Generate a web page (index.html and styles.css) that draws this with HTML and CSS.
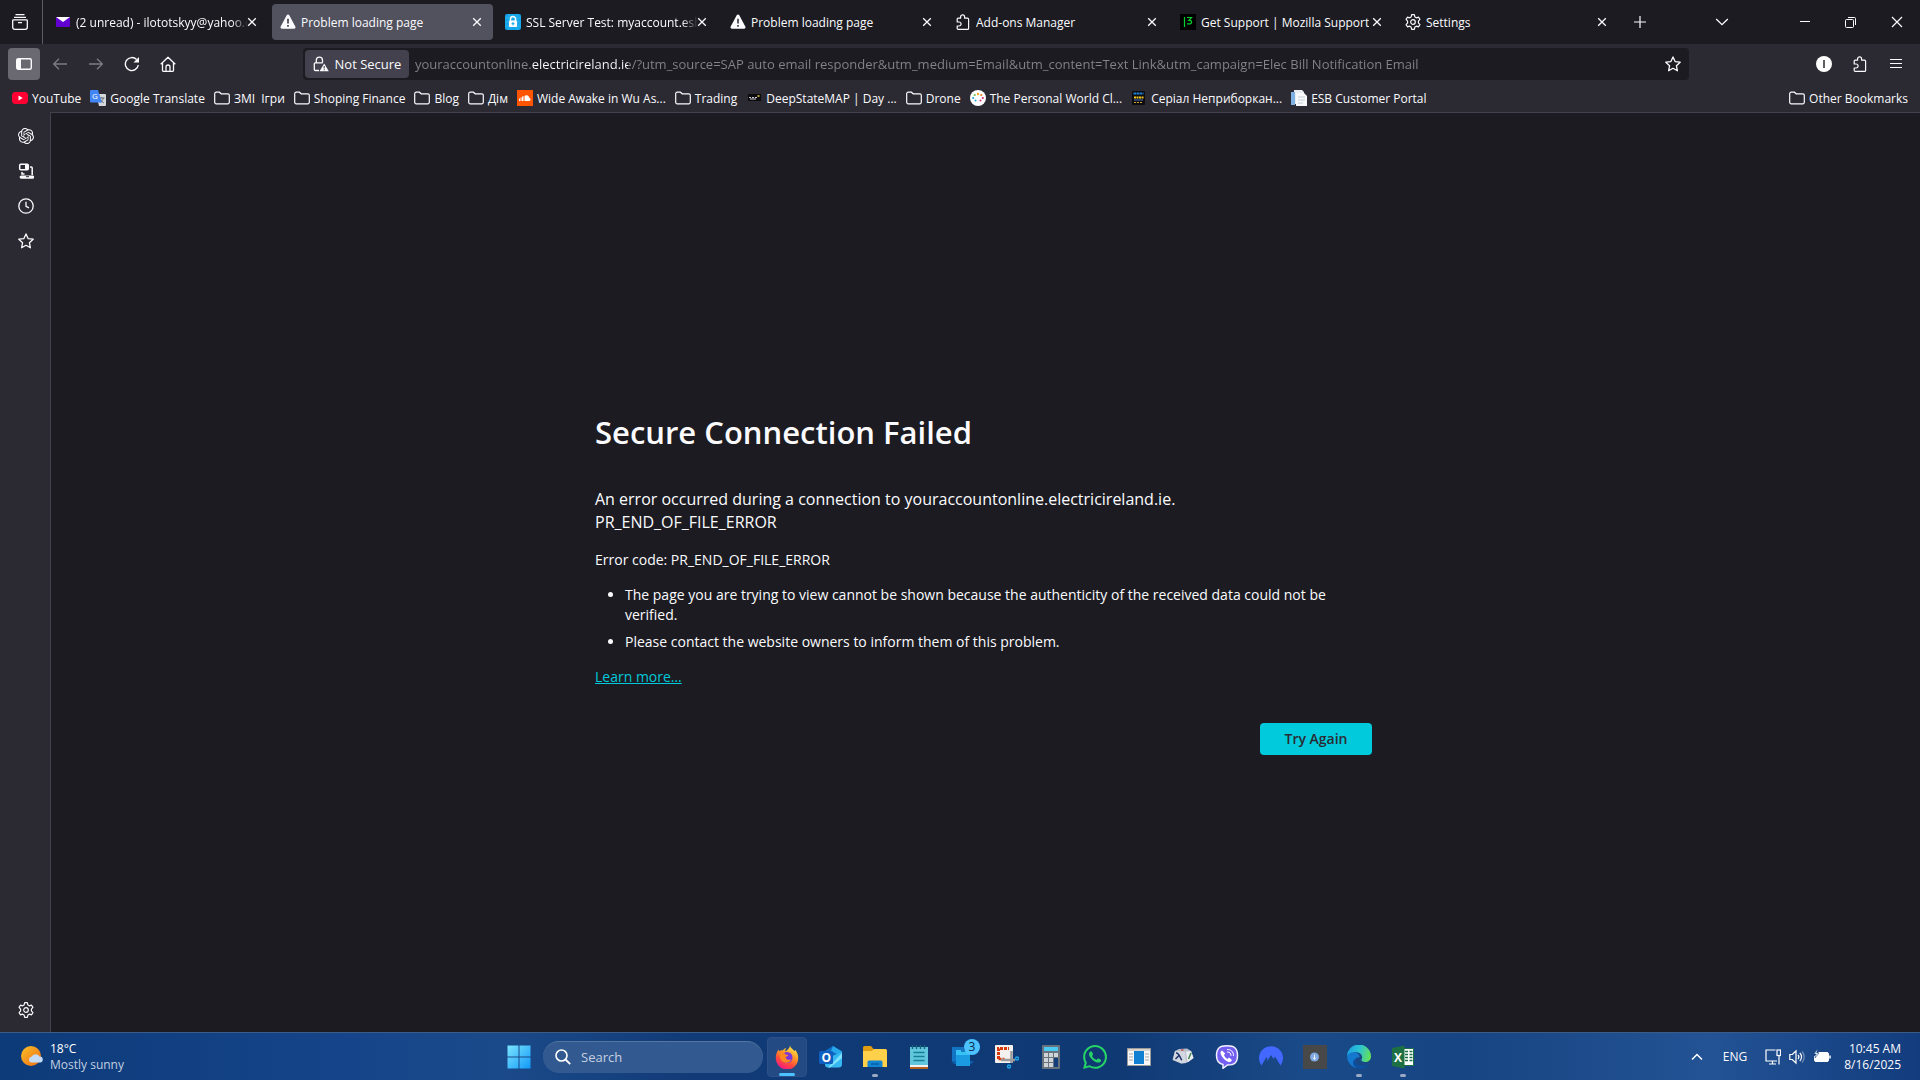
FILE: index.html
```
<!DOCTYPE html>
<html lang="en">
<head>
    <meta charset="utf-8">
    <title>Problem loading page</title>
    <link rel="stylesheet" href="styles.css">
</head>
<body>
    <!-- shared icons -->
    <svg class="defs" width="0" height="0">
        <symbol id="i-close" viewBox="0 0 16 16"><path d="M4.2 4.2l7.6 7.6M11.8 4.2l-7.6 7.6" fill="none" stroke="currentColor" stroke-width="1.3"/></symbol>
        <symbol id="i-warn" viewBox="0 0 16 16"><path d="M6.7 1.3a1.5 1.5 0 0 1 2.6 0l6 11.1a1.5 1.5 0 0 1-1.3 2.3H2a1.500 1.500 0 0 1-1.300-2.300z" fill="#fbfbfe"/><path d="M8 4.800v4.700M8 11v1.700" stroke="#2b2a33" stroke-width="1.500"/></symbol>
        <symbol id="i-folder" viewBox="0 0 16 16"><path d="M.7 12.300V3.700a1.500 1.500 0 0 1 1.500-1.500h3.200l1.800 1.600h6.600a1.500 1.500 0 0 1 1.500 1.500v7a1.500 1.500 0 0 1-1.500 1.500H2.200a1.500 1.500 0 0 1-1.500-1.500z" fill="none" stroke="currentColor" stroke-width="1.200"/></symbol>
        <symbol id="i-puzzle" viewBox="0 0 16 16"><path d="M2.200 8V5.200a1 1 0 0 1 1-1h2.400V2.900a2 2 0 0 1 4 0v1.300h3a1 1 0 0 1 1 1v9.200a1 1 0 0 1-1 1H3.200a1 1 0 0 1-1-1V12h1.900a2 2 0 0 0 0-4z" fill="none" stroke="currentColor" stroke-width="1.200" stroke-linejoin="round"/></symbol>
        <symbol id="i-gear" viewBox="0 0 16 16"><path d="M6.700.7h2.600l.6 2.200 1.500.9 2.200-.6 1.300 2.200-1.500 1.700v1.800l1.500 1.700-1.300 2.200-2.200-.6-1.500.9-.6 2.200H6.700l-.6-2.200-1.500-.9-2.200.6-1.300-2.200 1.500-1.700V7.100L1.100 5.400l1.300-2.200 2.200.6 1.500-.9z" fill="none" stroke="currentColor" stroke-width="1.200" stroke-linejoin="round"/><circle cx="8" cy="8" r="2.300" fill="none" stroke="currentColor" stroke-width="1.200"/></symbol>
        <symbol id="i-star" viewBox="0 0 16 16"><path d="M8 .9l2.100 4.700 5.100.6-3.800 3.500 1 5.100L8 12.300l-4.400 2.500 1-5.100L.8 6.200l5.100-.6z" fill="none" stroke="currentColor" stroke-width="1.300" stroke-linejoin="round"/></symbol>
    </svg>

    <header class="browser-top">
        <div class="tab-bar">
            <button class="view-btn" aria-label="Firefox View">
                <svg width="16" height="16" viewBox="0 0 16 16" fill="none" stroke="currentColor" stroke-width="1.300"><path d="M3.500.700h9M2 3.400h12M1.500 5.800h13a.8.8 0 0 1 .8.8v6.700a2 2 0 0 1-2 2H2.700a2 2 0 0 1-2-2V6.600a.8.8 0 0 1 .8-.8zM6 8.600h4"/></svg>
            </button>
            <nav class="tabs">
                <div class="tab">
                    <svg class="icon" viewBox="0 0 16 16"><rect x="1" y="3" width="14" height="10" rx="1" fill="#6001d2"/><path d="M1 3h14L8 8z" fill="#fff"/></svg>
                    <span class="tab-label faded">(2 unread) - ilototskyy@yahoo.c</span>
                    <button class="tab-close" aria-label="Close tab"><svg class="icon"><use href="#i-close"/></svg></button>
                </div>
                <div class="tab active">
                    <svg class="icon"><use href="#i-warn"/></svg>
                    <span class="tab-label">Problem loading page</span>
                    <button class="tab-close" aria-label="Close tab"><svg class="icon"><use href="#i-close"/></svg></button>
                </div>
                <div class="tab">
                    <svg class="icon" viewBox="0 0 16 16"><rect width="16" height="16" rx="2" fill="#12a5ea"/><path d="M0 4h16M0 8h16M0 12h16M4 0v16M12 0v16" stroke="#45bcf2" stroke-width=".5"/><path d="M5.500 7V5a2.500 2.500 0 0 1 5 0v2" fill="none" stroke="#fff" stroke-width="1.500"/><rect x="4" y="6.500" width="8" height="6.500" rx="1" fill="#fff"/><path d="M8 8v3.500M6.500 9.700h3" stroke="#12a5ea"/></svg>
                    <span class="tab-label faded">SSL Server Test: myaccount.esbr</span>
                    <button class="tab-close" aria-label="Close tab"><svg class="icon"><use href="#i-close"/></svg></button>
                </div>
                <div class="tab">
                    <svg class="icon"><use href="#i-warn"/></svg>
                    <span class="tab-label">Problem loading page</span>
                    <button class="tab-close" aria-label="Close tab"><svg class="icon"><use href="#i-close"/></svg></button>
                </div>
                <div class="tab">
                    <svg class="icon"><use href="#i-puzzle"/></svg>
                    <span class="tab-label">Add-ons Manager</span>
                    <button class="tab-close" aria-label="Close tab"><svg class="icon"><use href="#i-close"/></svg></button>
                </div>
                <div class="tab">
                    <svg class="icon" viewBox="0 0 16 16"><path d="M0 0h16v16H0z"/><path d="M4.500 3v10M7 3.500h4.500L9 6.300c3.500-.3 3.500 4-.3 3.500H7" fill="none" stroke="#00d230" stroke-width="1.200"/></svg>
                    <span class="tab-label">Get Support | Mozilla Support</span>
                    <button class="tab-close" aria-label="Close tab"><svg class="icon"><use href="#i-close"/></svg></button>
                </div>
                <div class="tab">
                    <svg class="icon"><use href="#i-gear"/></svg>
                    <span class="tab-label">Settings</span>
                    <button class="tab-close" aria-label="Close tab"><svg class="icon"><use href="#i-close"/></svg></button>
                </div>
            </nav>
            <button class="tool-btn new-tab" aria-label="New tab"><svg class="icon" viewBox="0 0 16 16"><path d="M8 2v12M2 8h12" stroke="currentColor" stroke-width="1.200"/></svg></button>
            <button class="tool-btn all-tabs" aria-label="List all tabs"><svg class="icon" viewBox="0 0 16 16"><path d="M2.200 5L8 10.700 13.800 5" fill="none" stroke="currentColor" stroke-width="1.300"/></svg></button>
            <div class="window-btns">
                <button aria-label="Minimize"><svg class="icon" viewBox="0 0 16 16"><path d="M3 7.500h10" stroke="currentColor"/></svg></button>
                <button aria-label="Restore"><svg class="icon" viewBox="0 0 16 16" fill="none" stroke="currentColor"><rect x="2.500" y="5.500" width="8" height="8" rx="1"/><path d="M5 3.500h6.500a1 1 0 0 1 1 1V11"/></svg></button>
                <button aria-label="Close"><svg class="icon" viewBox="0 0 16 16"><path d="M3 3l10 10M13 3L3 13" stroke="currentColor" stroke-width="1.200"/></svg></button>
            </div>
        </div>

        <div class="nav-bar">
            <div class="nav-left">
                <button class="tool-btn pressed" aria-label="Sidebar"><svg class="icon" viewBox="0 0 16 16"><rect x=".7" y="2.700" width="14.600" height="10.600" rx="1.500" fill="none" stroke="currentColor" stroke-width="1.400"/><path d="M1 3h4v10H1z" fill="currentColor"/></svg></button>
                <button class="tool-btn" aria-label="Back" disabled><svg class="icon" viewBox="0 0 16 16"><path d="M15 8H1.800M7 2.700L1.700 8 7 13.300" fill="none" stroke="currentColor" stroke-width="1.300"/></svg></button>
                <button class="tool-btn" aria-label="Forward" disabled><svg class="icon" viewBox="0 0 16 16"><path d="M1 8h13.200M9 2.700L14.300 8 9 13.300" fill="none" stroke="currentColor" stroke-width="1.300"/></svg></button>
                <button class="tool-btn" aria-label="Reload"><svg class="icon" viewBox="0 0 16 16"><path d="M14.300 9A6.500 6.500 0 1 1 12.600 3.600" fill="none" stroke="currentColor" stroke-width="1.400"/><path d="M15 .9V6.500H9.500z" fill="currentColor"/></svg></button>
                <button class="tool-btn" aria-label="Home"><svg class="icon" viewBox="0 0 16 16" fill="none" stroke="currentColor" stroke-width="1.300" stroke-linejoin="round"><path d="M.7 8.200L8 1.200l7.300 7M2.500 6.800v7.700a.8.8 0 0 0 .8.8h9.400a.8.8 0 0 0 .8-.8V6.800M6 15v-4a2 2 0 0 1 4 0v4"/></svg></button>
            </div>
            <div class="url-bar">
                <button class="identity">
                    <svg class="icon" viewBox="0 0 16 16"><path d="M3.300 6.500V4.300a3 3 0 0 1 6.200 0v2.200M6 14.500H2.300a1 1 0 0 1-1-1v-5.700a1 1 0 0 1 1-1h7.500" fill="none" stroke="currentColor" stroke-width="1.300"/><path d="M11.200 7.500l4.600 7.700H6.600z" fill="currentColor"/><path d="M11.200 10v2.500M11.200 13.300v1" stroke="#42414d" stroke-width="1.100"/></svg>
                    Not Secure
                </button>
                <input class="url-input" type="text" aria-label="Address" value="youraccountonline.electricireland.ie/?utm_source=SAP auto email responder&amp;utm_medium=Email&amp;utm_content=Text Link&amp;utm_campaign=Elec Bill Notification Email">
                <button class="tool-btn star" aria-label="Bookmark this page"><svg class="icon"><use href="#i-star"/></svg></button>
            </div>
            <div class="nav-right">
                <button class="tool-btn" aria-label="Account"><svg class="icon" viewBox="0 0 16 16"><circle cx="8" cy="8" r="8" fill="#fff"/><path d="M8 4v8" stroke="#1c1b22" stroke-width="1.400"/></svg></button>
                <button class="tool-btn" aria-label="Extensions"><svg class="icon"><use href="#i-puzzle"/></svg></button>
                <button class="tool-btn" aria-label="Menu"><svg class="icon" viewBox="0 0 16 16"><path d="M2 3.500h12M2 7.500h12M2 11.500h12" stroke="currentColor" stroke-width="1.200"/></svg></button>
            </div>
        </div>

        <nav class="bookmarks">
            <a href="#"><svg class="icon" viewBox="0 0 16 16"><rect y="2" width="16" height="12" rx="3.500" fill="#f03"/><path d="M6.500 5.500v5L10.700 8z" fill="#fff"/></svg>YouTube</a>
            <a href="#"><svg class="icon" viewBox="0 0 16 16"><path d="M6 4h9a1 1 0 0 1 1 1v10a1 1 0 0 1-1 1H9z" fill="#d5d7da"/><path d="M9 8h5.500M11.800 7v1M13.500 8c-.5 2-2 3.500-3.500 4.300M10.300 9.300c.7 1.500 2 2.700 3.500 3.500" fill="none" stroke="#5f6368" stroke-width=".9"/><path d="M1 0h7l4 12.500H1a1 1 0 0 1-1-1V1a1 1 0 0 1 1-1z" fill="#4285f4"/><text x="2" y="9" font-size="8" fill="#fff">G</text></svg>Google Translate</a>
            <a href="#"><svg class="icon"><use href="#i-folder"/></svg>ЗМІ&nbsp; Ігри</a>
            <a href="#"><svg class="icon"><use href="#i-folder"/></svg>Shoping Finance</a>
            <a href="#"><svg class="icon"><use href="#i-folder"/></svg>Blog</a>
            <a href="#"><svg class="icon"><use href="#i-folder"/></svg>Дім</a>
            <a href="#"><svg class="icon" viewBox="0 0 16 16"><path d="M0 0h16v16H0z" fill="#ff5500"/><path d="M2.500 8.500V11M4 7.500V11M5.500 6.500V11M7 6V11" stroke="#fff"/><path d="M8 5.500a3 3 0 0 1 4.300 2.300A1.700 1.700 0 0 1 12.500 11H8z" fill="#fff"/></svg>Wide Awake in Wu As...</a>
            <a href="#"><svg class="icon"><use href="#i-folder"/></svg>Trading</a>
            <a href="#"><svg class="icon" viewBox="0 0 16 16"><path d="M2 4h13v7H2z" fill="#0b0b0d"/><path d="M3 7.500h2M6 7.500h2M9 7.500h2M4 9h6" stroke="#cfcfd8"/><path d="M11.500 6h2" stroke="#e6d93a" stroke-width="1.500"/></svg>DeepStateMAP | Day ...</a>
            <a href="#"><svg class="icon"><use href="#i-folder"/></svg>Drone</a>
            <a href="#"><svg class="icon" viewBox="0 0 16 16"><circle cx="8" cy="8" r="8" fill="#fff"/><circle cx="3.200" cy="8" r="1.100" fill="#29a3dc"/><circle cx="4.700" cy="5" r="1.100" fill="#6cbe45"/><circle cx="5.500" cy="10.500" r="1" fill="#29a3dc"/><circle cx="8" cy="4" r="1.200" fill="#f5a623"/><circle cx="11.300" cy="5" r="1.100" fill="#f07c1f"/><circle cx="12.800" cy="8" r="1.100" fill="#d9277a"/><circle cx="10.500" cy="10.500" r="1" fill="#d9277a"/></svg>The Personal World Cl...</a>
            <a href="#"><svg class="icon" viewBox="0 0 16 16"><rect x="1" y="1" width="13" height="14" rx="1" fill="#0c0c0f"/><path d="M2.500 3.500h10" stroke="#1c7fd6" stroke-width="2.200" stroke-dasharray="2.500 .5"/><path d="M3 7.500h9.500" stroke="#f3c81b" stroke-width="1.800" stroke-dasharray="2 .5"/><path d="M3 10h9" stroke="#4d6dc0"/><path d="M3 12.500h9" stroke="#c9a532" stroke-dasharray="2 1"/></svg>Серіал Неприборкан...</a>
            <a href="#"><svg class="icon" viewBox="0 0 16 16"><path d="M3 0h8l2 2v12H3z" fill="#e9edf2"/><path d="M0 2h4v13H0z" fill="#7fb2e2"/><path d="M5 3h8l3 3v10H5z" fill="#f7f9fb"/><path d="M7 7h7M7 10h7M7 13h5" stroke="#c5ced8"/></svg>ESB Customer Portal</a>
            <a class="other" href="#"><svg class="icon"><use href="#i-folder"/></svg>Other Bookmarks</a>
        </nav>
    </header>

    <div class="browser-main">
        <aside class="sidebar">
            <button aria-label="AI chatbot"><svg class="icon" viewBox="0 0 24 24" fill="currentColor"><path d="M22.2819 9.8211a5.9847 5.9847 0 0 0-.5157-4.9108 6.0462 6.0462 0 0 0-6.5098-2.9A6.0651 6.0651 0 0 0 4.9807 4.1818a5.9847 5.9847 0 0 0-3.9977 2.9 6.0462 6.0462 0 0 0 .7427 7.0966 5.98 5.98 0 0 0 .511 4.9107 6.051 6.051 0 0 0 6.5146 2.9001A5.9847 5.9847 0 0 0 13.2599 24a6.0557 6.0557 0 0 0 5.7718-4.2058 5.9894 5.9894 0 0 0 3.9977-2.9001 6.0557 6.0557 0 0 0-.7475-7.0729zm-9.022 12.6081a4.4755 4.4755 0 0 1-2.8764-1.0408l.1419-.0804 4.7783-2.7582a.7948.7948 0 0 0 .3927-.6813v-6.7369l2.02 1.1686a.071.071 0 0 1 .038.052v5.5826a4.504 4.504 0 0 1-4.4945 4.4944zm-9.6607-4.1254a4.4708 4.4708 0 0 1-.5346-3.0137l.142.0852 4.783 2.7582a.7712.7712 0 0 0 .7806 0l5.8428-3.3685v2.3324a.0804.0804 0 0 1-.0332.0615L9.74 19.9502a4.4992 4.4992 0 0 1-6.1408-1.6464zM2.3408 7.8956a4.485 4.485 0 0 1 2.3655-1.9728V11.6a.7664.7664 0 0 0 .3879.6765l5.8144 3.3543-2.0201 1.1685a.0757.0757 0 0 1-.071 0l-4.8303-2.7865A4.504 4.504 0 0 1 2.3408 7.872zm16.5963 3.8558L13.1038 8.364 15.1192 7.2a.0757.0757 0 0 1 .071 0l4.8303 2.7913a4.4944 4.4944 0 0 1-.6765 8.1042v-5.6772a.79.79 0 0 0-.407-.667zm2.0107-3.0231l-.142-.0852-4.7735-2.7818a.7759.7759 0 0 0-.7854 0L9.409 9.2297V6.8974a.0662.0662 0 0 1 .0284-.0615l4.8303-2.7866a4.4992 4.4992 0 0 1 6.6802 4.66zM8.3065 12.863l-2.02-1.1638a.0804.0804 0 0 1-.038-.0567V6.0742a4.4992 4.4992 0 0 1 7.3757-3.4537l-.142.0805L8.704 5.459a.7948.7948 0 0 0-.3927.6813zm1.0976-2.3654l2.602-1.4998 2.6069 1.4998v2.9994l-2.5974 1.4997-2.6067-1.4997Z"/></svg></button>
            <button aria-label="Synced tabs"><svg class="icon" viewBox="0 0 16 16"><rect x="1.700" y="1.200" width="8.600" height="5.600" rx="1" fill="none" stroke="currentColor" stroke-width="1.500"/><path d="M7 1h3v6H7zM3.200 12.500h11.600a1.600 1.600 0 0 1 0 3.200H3.200a1.600 1.600 0 0 1 0-3.200z" fill="currentColor"/><path d="M4 9v2h2.500M12 4h1.200a1 1 0 0 1 1 1v7" fill="none" stroke="currentColor" stroke-width="1.500"/><path d="M8 13.700h3" stroke="#2b2a33"/></svg></button>
            <button aria-label="History"><svg class="icon" viewBox="0 0 16 16" fill="none" stroke="currentColor" stroke-width="1.300"><circle cx="8" cy="8" r="7.200"/><path d="M8 3.800v4.500l3 1.500"/></svg></button>
            <button aria-label="Bookmarks"><svg class="icon"><use href="#i-star"/></svg></button>
            <button class="customize" aria-label="Customize sidebar"><svg class="icon"><use href="#i-gear"/></svg></button>
        </aside>

        <main class="page">
            <div class="error">
                <h1>Secure Connection Failed</h1>
                <p class="short-desc">An error occurred during a connection to youraccountonline.electricireland.ie. PR_END_OF_FILE_ERROR</p>
                <p>Error code: PR_END_OF_FILE_ERROR</p>
                <ul>
                    <li>The page you are trying to view cannot be shown because the authenticity of the received data could not be verified.</li>
                    <li>Please contact the website owners to inform them of this problem.</li>
                </ul>
                <p><a href="#">Learn more…</a></p>
                <div class="actions"><button class="try-again">Try Again</button></div>
            </div>
        </main>
    </div>

    <footer class="taskbar">
        <button class="weather">
            <svg width="24" height="24" viewBox="0 0 24 24"><defs><linearGradient id="sun" x1="0" y1="0" x2="1" y2="1"><stop offset="0" stop-color="#f9c22b"/><stop offset="1" stop-color="#f06a12"/></linearGradient></defs><circle cx="11" cy="11" r="10" fill="url(#sun)"/><path d="M11 17.500a3 3 0 0 1 .5-5.800 4.500 4.500 0 0 1 8-.2 3 3 0 0 1 .5 6z" fill="#c4dbf8"/></svg>
            <span><span class="temp">18°C</span><br>Mostly sunny</span>
        </button>

        <div class="apps">
            <button class="app" aria-label="Start"><svg width="24" height="24" viewBox="0 0 24 24"><defs><linearGradient id="win" gradientUnits="userSpaceOnUse" x1="0" y1="0" x2="24" y2="24"><stop offset="0" stop-color="#7ee6ff"/><stop offset="1" stop-color="#0f97f7"/></linearGradient></defs><path d="M.500.500h11v11H.500zM12.500.500h11v11h-11zM.500 12.500h11v11H.500zM12.500 12.500h11v11h-11z" fill="url(#win)"/></svg></button>
            <label class="search">
                <svg width="16" height="16" viewBox="0 0 16 16"><circle cx="6.500" cy="6.500" r="5.500" fill="none" stroke="#fff" stroke-width="1.600"/><path d="M10.500 10.500l4.700 4.700" stroke="#fff" stroke-width="1.800"/></svg>
                <input type="text" placeholder="Search" aria-label="Search">
            </label>
            <button class="app current" aria-label="Firefox"><svg width="24" height="24" viewBox="0 0 24 24"><defs><linearGradient id="ff" x1=".8" y1="0" x2=".3" y2="1"><stop offset="0" stop-color="#fff44f"/><stop offset=".4" stop-color="#ff9a28"/><stop offset=".7" stop-color="#ff4a3b"/><stop offset="1" stop-color="#f0168a"/></linearGradient></defs><path d="M15 .500c.3 2.500 3 3.500 4.500 5.500.5-.2.800-.5 1-1 2 3 3 6 2.700 9A11.200 11.200 0 0 1 .8 12.500C.8 9.500 1.800 6.500 3.700 4.500l.5 1.800C5.500 5.200 6.800 5 8 5.300 9 4 9.800 3.300 11.200 3c-1 1.400-1.200 2.300-.7 3.400C12 5 14.500 4 15 .500z" fill="url(#ff)"/><circle cx="12" cy="12.500" r="5.500" fill="#7a36dd"/><path d="M4.500 8.500c3-1.500 5-.5 6.500 1.200h2.500c-.4 1.500-2 2-3 2.300.3 2.700 3.500 3.700 6 2-1 3-4 4.500-7 3.500-3-1-5-4.500-5-9z" fill="#ff8a22"/></svg></button>
            <button class="app" aria-label="Outlook"><svg width="24" height="24" viewBox="0 0 24 24"><path d="M4 7l10-6 9 5.500V12L14 16 4 13z" fill="#0f6bc4"/><path d="M14 1l9 5.500v5L12 6z" fill="#28a8ea"/><path d="M6 14l17-7v12a3.500 3.500 0 0 1-3.500 3.500H9A3 3 0 0 1 6 19.500z" fill="#35b8f1"/><path d="M23 8v5l-12 9.500H9z" fill="#7ee1fb"/><rect x="0" y="6" width="14" height="13" rx="1.500" fill="#0f5fc0"/><text x="2.500" y="17" font-size="12" font-weight="700" fill="#fff">O</text></svg></button>
            <button class="app open" aria-label="File Explorer"><svg width="24" height="24" viewBox="0 0 24 24"><path d="M0 2.500A1.500 1.500 0 0 1 1.500 1H8l2.500 3H15v4H0z" fill="#e09c12"/><path d="M0 6h9l2-2h11.500A1.500 1.500 0 0 1 24 5.500V22H0z" fill="#ffd04a"/><path d="M4.500 22v-5A1.500 1.500 0 0 1 6 15.500h12a1.500 1.500 0 0 1 1.500 1.500v5z" fill="#1184d2"/><path d="M8 19h8" stroke="#0a5fa5" stroke-width="1.500"/></svg></button>
            <button class="app" aria-label="Notepad"><svg width="24" height="24" viewBox="0 0 24 24"><path d="M3 21h18v3H3z" fill="#b5601f"/><path d="M3 19h18v3H3z" fill="#f2f2f2"/><path d="M3 2h18v18H3z" fill="#62c7dc"/><path d="M5.500 0v4M9.500 0v4M13.500 0v4M17.500 0v4" stroke="#16647c" stroke-width="1.500"/><path d="M6.500 7.500h11M6.500 11.500h11M6.500 15.500h11" stroke="#157f97" stroke-width="1.600"/></svg></button>
            <button class="app" aria-label="Phone Link"><svg width="24" height="24" viewBox="0 0 24 24"><path d="M1 2h12v14H1z" fill="#1474c4"/><path d="M0 16h23l-3 3H3z" fill="#0d5fae"/><path d="M5 5h14v16H5z" fill="#1b9be2"/><path d="M5 5h14v5H5z" fill="#36c2f5"/><path d="M10 6h4" stroke="#0c62ab" stroke-width="1.500"/></svg><span class="badge">3</span></button>
            <button class="app" aria-label="Snipping Tool"><svg width="24" height="24" viewBox="0 0 24 24"><rect width="18" height="18" rx="1" fill="#f4f2f1"/><path d="M3.500 14V3.500H14" fill="none" stroke="#d8390b" stroke-width="3" stroke-dasharray="3 1"/><path d="M3.500 14h6" stroke="#d8390b" stroke-width="2.500" stroke-dasharray="3 1"/><path d="M16.500 6v12M6 15h14" stroke="#9a9a9a" stroke-width="2.500"/><circle cx="22" cy="13.500" r="1.500" fill="none" stroke="#1ea0e6" stroke-width="1.500"/><circle cx="14" cy="21.500" r="1.500" fill="none" stroke="#1ea0e6" stroke-width="1.500"/></svg></button>
            <button class="app" aria-label="Calculator"><svg width="24" height="24" viewBox="0 0 24 24"><rect x="3" width="18" height="24" rx="1" fill="#68737e"/><path d="M5 2h14v4H5z" fill="#4cc9f0"/><path d="M5 8h4v4H5zM10 8h4v4h-4zM15 8h4v4h-4zM5 13h4v4H5zM10 13h4v4h-4zM5 18h4v4H5zM10 18h4v4h-4z" fill="#cfd4d9"/><path d="M15 13h4v9h-4z" fill="#123f7c"/></svg></button>
            <button class="app" aria-label="WhatsApp"><svg width="24" height="24" viewBox="0 0 24 24"><path fill="#25d366" d="M17.472 14.382c-.297-.149-1.758-.867-2.03-.967-.273-.099-.471-.148-.67.15-.197.297-.767.966-.94 1.164-.173.199-.347.223-.644.075-.297-.15-1.255-.463-2.39-1.475-.883-.788-1.48-1.761-1.653-2.059-.173-.297-.018-.458.13-.606.134-.133.298-.347.446-.52.149-.174.198-.298.298-.497.099-.198.05-.371-.025-.52-.075-.149-.669-1.612-.916-2.207-.242-.579-.487-.5-.669-.51-.173-.008-.371-.01-.57-.01-.198 0-.52.074-.792.372-.272.297-1.04 1.016-1.04 2.479 0 1.462 1.065 2.875 1.213 3.074.149.198 2.096 3.2 5.077 4.487.709.306 1.262.489 1.694.625.712.227 1.36.195 1.871.118.571-.085 1.758-.719 2.006-1.413.248-.694.248-1.289.173-1.413-.074-.124-.272-.198-.57-.347m-5.421 7.403h-.004a9.87 9.87 0 01-5.031-1.378l-.361-.214-3.741.982.998-3.648-.235-.374a9.86 9.86 0 01-1.51-5.26c.001-5.45 4.436-9.884 9.888-9.884 2.64 0 5.122 1.03 6.988 2.898a9.825 9.825 0 012.893 6.994c-.003 5.45-4.437 9.884-9.885 9.884m8.413-18.297A11.815 11.815 0 0012.05 0C5.495 0 .16 5.335.157 11.892c0 2.096.547 4.142 1.588 5.945L.057 24l6.305-1.654a11.882 11.882 0 005.683 1.448h.005c6.554 0 11.89-5.335 11.893-11.893a11.821 11.821 0 00-3.48-8.413z"/></svg></button>
            <button class="app" aria-label="Reader"><svg width="24" height="24" viewBox="0 0 24 24"><path d="M.500 3.500h23v17H.500z" fill="#f7f7f7" stroke="#9c9c9c"/><path d="M1 4h22v2H1z" fill="#d9d4cc"/><path d="M2 9h4M2 12h4M2 15h4M18 9h4M18 12h4M18 15h4" stroke="#a9a9a9"/><path d="M7 6h10v13H7z" fill="#1180d2"/></svg></button>
            <button class="app" aria-label="Dictionary"><svg width="24" height="24" viewBox="0 0 24 24"><path d="M4 6l4-2 8-.5L20 6l2.500 7-5.500 4-7 1.500-8.500-3.500z" fill="#b9bfca"/><path d="M4 6l10 .5 1.500 11.500-5 .5-8.500-4z" fill="#d3d8e0"/><path d="M15 6.500L20 6l2.500 7-6 4.500z" fill="#e9ecf0"/><path d="M5 8c4 0 4 6 6 7M8.500 10l-4 4" fill="none" stroke="#20346e" stroke-width="1.600"/><path d="M17.500 14l2.500-6" stroke="#358445" stroke-width="1.400"/><path d="M10 5h2.500" stroke="#c33" stroke-width="1.200"/></svg></button>
            <button class="app" aria-label="Viber"><svg width="24" height="24" viewBox="0 0 24 24"><path d="M12 .800c7.500 0 10.500 2.500 10.500 9.700S19.500 20 12.500 20L8 23.300V19.500C3 18.500 1.500 15.500 1.500 10.500 1.500 3.300 4.500.800 12 .800z" fill="#7360f2" stroke="#f2f0ff" stroke-width="1.500"/><path d="M7 5.500c-1.500.8-2 2-1 4.200 1.500 3.300 4 5.700 7.500 7.200 1.700.5 3-.8 3.500-2l-3-2.300-1.500 1.300c-1.800-.8-3-2.300-3.500-4l1.200-1.400z" fill="#fff"/><path d="M12.500 4.500c3.500 0 6 2 6 6M12.500 7c2 0 3.500 1 3.500 3.500" fill="none" stroke="#fff" stroke-linecap="round"/></svg></button>
            <button class="app" aria-label="NordVPN"><svg width="24" height="24" viewBox="0 0 24 24"><path d="M2.500 20.500A12 12 0 1 1 21.500 20.500L16 11.500l-1.500 2.500 1 1.500L12 10l-4 6.500.500-2.500L7.500 12z" fill="#4268ff"/></svg></button>
            <button class="app" aria-label="Recorder"><svg width="24" height="24" viewBox="0 0 24 24"><path d="M0 0h24v24H0z" fill="#484848"/><circle cx="11.500" cy="12" r="4.500" fill="#7fa9e0"/><path d="M11.500 9.500v5M10 12.500l1.500 2 1.500-2" fill="none" stroke="#e6effb"/></svg></button>
            <button class="app open" aria-label="Edge"><svg width="24" height="24" viewBox="0 0 24 24"><defs><linearGradient id="edge1" x1="0" y1=".3" x2="1" y2=".5"><stop offset="0" stop-color="#1c9fe3"/><stop offset=".5" stop-color="#2cc3d3"/><stop offset="1" stop-color="#64e05a"/></linearGradient></defs><path d="M0 12A12 12 0 0 1 24 11c0 4-2.500 6-6 6-3 0-4-1.500-3.500-2.500C17 10 12 6.500 7 7.500 3 8.300.5 10 0 12z" fill="url(#edge1)"/><path d="M0 12C1 8 5 6.500 8.500 7.500c3 .8 4.500 3 4 5-2-1-5 1-4.500 4.500C8.500 21 13 23 17 22A12 12 0 0 1 0 12z" fill="#1478cf"/><path d="M9 14c-2.500 5 3 9 12.500 5.200C17 25.500 9 24.500 6.500 20 5 16.500 7 14 9 14z" fill="#0d4fa0"/></svg></button>
            <button class="app open" aria-label="Excel"><svg width="24" height="24" viewBox="0 0 24 24"><path d="M12 3.500h10.500v17H12z" fill="#fff" stroke="#1d7044"/><path d="M14 6.500h3M14 9.500h3M14 12.500h3M14 15.500h3M18.500 6.500h3M18.500 9.500h3M18.500 12.500h3M18.500 15.500h3" stroke="#1d7044" stroke-width="1.500"/><path d="M1 3l12.500-2.500v23L1 21z" fill="#1d7044"/><text x="3" y="16.500" font-size="12" font-weight="700" fill="#fff">X</text></svg></button>
        </div>

        <div class="tray">
            <button aria-label="Show hidden icons"><svg width="12" height="16" viewBox="0 0 12 16"><path d="M1 10.500L6 5.500l5 5" fill="none" stroke="#fff" stroke-width="1.500"/></svg></button>
            <button class="lang">ENG</button>
            <button class="status" aria-label="Network, volume and battery">
                <svg width="16" height="18" viewBox="0 0 16 18" fill="none" stroke="#fff" stroke-width="1.200"><path d="M10.500 2H1v11h11M4 16h7M7.500 13v3M14 8v8.500"/><rect x="12" y="2" width="3.500" height="5.500"/></svg>
                <svg width="16" height="16" viewBox="0 0 16 16" fill="none" stroke="#fff" stroke-width="1.200"><path d="M.8 5.500h2.500L7 2v12L3.300 10.500H.8z"/><path d="M9 6a3 3 0 0 1 0 4M10.800 4a5.500 5.500 0 0 1 0 8"/><path d="M13 2.500a8 8 0 0 1 0 11" opacity=".4"/></svg>
                <svg width="18" height="16" viewBox="0 0 18 16"><path d="M6 3.500h8a1.500 1.500 0 0 1 1.500 1.500v6a1.500 1.500 0 0 1-1.500 1.500H3A1.500 1.500 0 0 1 1.500 11V7.500z" fill="#fff" stroke="#fff"/><path d="M17 6.500v3" stroke="#fff" stroke-width="1.500"/><path d="M4.500 0L1 5h2.200L2 9l4-5H3.700z" fill="#fff" stroke="#1f4f8f" stroke-width=".6"/></svg>
            </button>
            <button class="clock">10:45 AM<br>8/16/2025</button>
        </div>
    </footer>
</body>
</html>
```
FILE: styles.css
```
*{
    box-sizing: border-box;
}
html{
    height: 100%;
}
body{
    display: flex;
    flex-direction: column;
    margin: 0;
    min-height: 100%;
    background-color: #1c1b22;
    color: #fbfbfe;
    font-family: "Open Sans", "Noto Sans", sans-serif;
    font-size: 12px;
}
button, input{
    margin: 0;
    padding: 0;
    border: 0;
    background: none;
    color: inherit;
    font: inherit;
}
button{
    display: flex;
    align-items: center;
    justify-content: center;
}
svg{
    flex: none;
    display: block;
}
.defs{
    position: absolute;
}
.icon{
    width: 16px;
    height: 16px;
}

/* tab strip */
.tab-bar{
    display: flex;
    align-items: center;
    height: 44px;
}
.view-btn{
    flex: none;
    width: 43px;
    height: 44px;
    padding-right: 2px;
    border-right: 1px solid #5b5b66;
}
.tabs{
    display: flex;
    flex: 0 1 1571px;
    gap: 4px;
    min-width: 0;
    margin-left: 4px;
}
.tab{
    display: flex;
    flex: 1;
    align-items: center;
    height: 36px;
    min-width: 0;
    padding: 0 8px;
    border-radius: 4px;
}
.tab.active{
    background-color: #52525e;
}
.tab-label{
    flex: 1;
    min-width: 0;
    margin-left: 5px;
    overflow: hidden;
    white-space: nowrap;
}
.tab-label.faded{
    /* runs on under the close button's own padding */
    margin-right: -4px;
    -webkit-mask-image: linear-gradient(to left, transparent, #000 16px);
    mask-image: linear-gradient(to left, transparent, #000 16px);
}
.tool-btn{
    flex: none;
    width: 32px;
    height: 32px;
    border-radius: 4px;
}
.tool-btn.pressed{
    background-color: #6a6972;
}
.tool-btn:disabled{
    color: #7d7c85;
}
.new-tab{
    margin-left: 6px;
}
.all-tabs{
    margin-left: auto;
}
.window-btns{
    display: flex;
    margin-left: 44px;
}
.window-btns button{
    width: 46px;
    height: 44px;
}

/* navigation toolbar */
.nav-bar{
    display: flex;
    align-items: center;
    justify-content: space-between;
    height: 40px;
    padding: 0 8px;
    background-color: #2b2a33;
}
.nav-left, .nav-right{
    display: flex;
    gap: 4px;
}
.url-bar{
    display: flex;
    flex: 1;
    align-items: center;
    height: 32px;
    margin: 0 119px;
    padding: 0 2px;
    border-radius: 4px;
    background-color: #1c1b22;
    font-size: 13px;
}
.identity{
    flex: none;
    gap: 6px;
    height: 28px;
    width: 104px;
    border-radius: 4px;
    background-color: #42414d;
    font-size: 13px;
}
.url-input{
    flex: 1;
    min-width: 0;
    height: 28px;
    margin-left: 6px;
    outline: none;
    color: #8f8f9d;
    /* the domain stands out from the rest of the address */
    background: linear-gradient(to right, #84848c 117px, #fbfbfe 117px, #fbfbfe 213px, #84848c 213px);
    -webkit-background-clip: text;
    background-clip: text;
    -webkit-text-fill-color: transparent;
}
.star{
    width: 28px;
}

/* bookmarks toolbar */
.bookmarks{
    display: flex;
    align-items: center;
    gap: 9px;
    height: 28px;
    padding: 0 12px;
    background-color: #2b2a33;
}
.bookmarks a{
    display: flex;
    align-items: center;
    gap: 4px;
    color: inherit;
    white-space: nowrap;
    text-decoration: none;
}
.bookmarks .other{
    margin-left: auto;
}

/* sidebar and page */
.browser-main{
    display: flex;
    flex: 1;
    background-color: #2b2a33;
}
.sidebar{
    display: flex;
    flex: none;
    flex-direction: column;
    gap: 3px;
    width: 50px;
    padding: 8px 0 6px;
}
.sidebar button{
    width: 52px;
    height: 32px;
}
.sidebar .customize{
    margin-top: auto;
}
.page{
    display: flex;
    flex: 1;
    align-items: center;
    justify-content: center;
    padding-top: 20px;
    border-top: 1px solid #42414d;
    border-left: 1px solid #42414d;
    background-color: #1c1b22;
    font-size: 14px;
    line-height: 20px;
}
.error{
    width: 777px;
    margin-right: 4px;
}
.error h1{
    margin: 0 0 34px;
    font-size: 31px;
    font-weight: 600;
    line-height: 44px;
}
.error p{
    margin: 0 0 15px;
}
.error .short-desc{
    max-width: 620px;
    margin-bottom: 16px;
    font-size: 16px;
    line-height: 23px;
}
.error ul{
    margin: 0 0 15px;
    padding-left: 30px;
}
.error li{
    margin-bottom: 7px;
}
.error a{
    color: #00cadb;
}
.actions{
    display: flex;
    justify-content: flex-end;
    margin-top: 36px;
}
.try-again{
    width: 112px;
    height: 32px;
    border-radius: 4px;
    background-color: #00cadb;
    color: #2b2a33;
    font-weight: 600;
}

/* taskbar */
.taskbar{
    display: grid;
    grid-template-columns: 1fr auto 1fr;
    align-items: center;
    height: 48px;
    padding-left: 2px;
    border-top: 1px solid #3c5c88;
    background: linear-gradient(to right, #0d3b79, #15448a 18%, #1b4a8a 26%, #113b77 36%, #0f3973 58%, #1a4a88 68%, #174482 76%, #235394 89%, #123c7e);
    line-height: 16px;
}
.weather{
    justify-self: start;
    gap: 6px;
    margin-left: 18px;
    color: #c3cfe0;
    text-align: left;
}
.temp{
    color: #fff;
}
.apps{
    display: flex;
    gap: 4px;
}
.app{
    position: relative;
    width: 40px;
    height: 40px;
    border-radius: 4px;
}
.app.current{
    border: 1px solid #2d5088;
    background-color: #234a83;
}
.app.open::after, .app.current::after{
    content: "";
    position: absolute;
    bottom: 0;
    left: 50%;
    width: 6px;
    height: 3px;
    border-radius: 2px;
    background-color: #9aa9c4;
    transform: translateX(-50%);
}
.app.current::after{
    width: 16px;
    background-color: #4cc2ff;
}
.badge{
    position: absolute;
    top: 2px;
    right: 3px;
    width: 16px;
    height: 16px;
    border-radius: 8px;
    background-color: #4cc2ff;
    color: #0a2a4a;
}
.search{
    display: flex;
    align-items: center;
    gap: 10px;
    width: 220px;
    height: 32px;
    align-self: center;
    padding: 0 12px;
    border-radius: 16px;
    border-top: 1px solid #56759f;
    background-color: #335a90;
    font-size: 13px;
}
.search input{
    flex: 1;
    min-width: 0;
    outline: none;
}
.search input::placeholder{
    color: #c5d0e0;
}
.tray{
    display: flex;
    align-items: center;
    justify-self: end;
    margin-right: 19px;
}
.lang{
    margin-left: 20px;
}
.status{
    gap: 8px;
    margin-left: 18px;
}
.clock{
    margin-left: 13px;
    text-align: right;
}
```
